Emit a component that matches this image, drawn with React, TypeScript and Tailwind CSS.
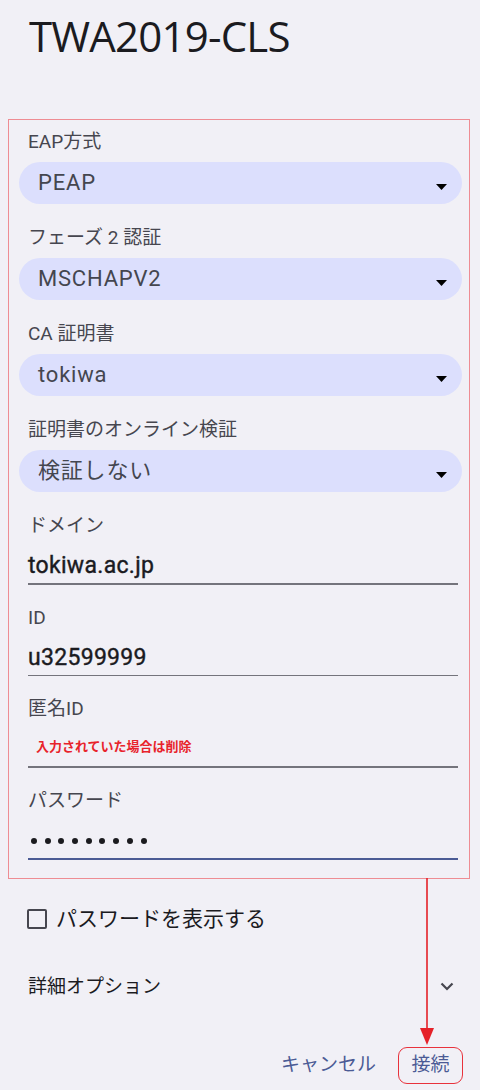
import React from "react"

const selects = [
  { label: "EAP方式", value: "PEAP" },
  { label: "フェーズ 2 認証", value: "MSCHAPV2" },
  { label: "CA 証明書", value: "tokiwa" },
  { label: "証明書のオンライン検証", value: "検証しない" },
]

function Caret() {
  return (
    <svg width="11" height="6" viewBox="0 0 11 6" className="mt-[8px] shrink-0">
      <polygon points="0,0 11,0 5.5,6" fill="#000" />
    </svg>
  )
}

function SelectField({ label, value }: { label: string; value: string }) {
  return (
    <div className="mb-[22px]">
      <div className="ml-[19px] text-[19px] leading-[24px] text-[#46464f]">{label}</div>
      <div className="ml-[10px] mr-[7px] mt-[8px] flex h-[42px] items-center justify-between rounded-full bg-[#dcdffd] pl-[19px] pr-[15px]">
        <span className="text-[22px] leading-[26px] tracking-[0.8px] text-[#44464f]">{value}</span>
        <Caret />
      </div>
    </div>
  )
}

function TextField({
  label,
  children,
  focused,
  last,
}: {
  label: string
  children: React.ReactNode
  focused?: boolean
  last?: boolean
}) {
  return (
    <div className={last ? "" : "mb-[21px]"}>
      <div className="ml-[19px] text-[19px] leading-[24px] text-[#46464f]">{label}</div>
      <div className="ml-[19px] mr-[11px] mt-[13px] flex h-[30px] items-center">{children}</div>
      <div
        className={
          focused
            ? "ml-[19px] mr-[11px] mt-[2px] h-[2px] bg-[#4b5b95]"
            : "ml-[19px] mr-[11px] mt-[2px] h-[1.5px] bg-[#74747c]"
        }
      />
    </div>
  )
}

export default function App() {
  return (
    <div className="relative h-[1090px] w-[480px] overflow-hidden bg-[#f1f0f6] font-[Roboto,'Noto_Sans_CJK_JP',sans-serif]">
      <h1 className="ml-[29px] mt-[11px] font-['Open_Sans','Noto_Sans_CJK_JP',sans-serif] text-[42px] leading-[50px] tracking-[-0.8px] text-[#1b1b1f]">
        TWA2019-CLS
      </h1>

      <div className="ml-[8px] mt-[58px] w-[462px] border border-[#ee8c93] pb-[18px] pt-[10px]">
        {selects.map((s) => (
          <SelectField key={s.label} label={s.label} value={s.value} />
        ))}
        <div className="h-px -mt-px" />

        <TextField label="ドメイン">
          <span className="text-[23px] font-normal leading-[30px] tracking-[0.3px] text-[#1b1b1f] [-webkit-text-stroke:0.4px_#1b1b1f]">
            tokiwa.ac.jp
          </span>
        </TextField>
        <TextField label="ID">
          <span className="text-[23px] font-normal leading-[30px] tracking-[0.3px] text-[#1b1b1f] [-webkit-text-stroke:0.4px_#1b1b1f]">
            u32599999
          </span>
        </TextField>
        <TextField label="匿名ID">
          <span className="pb-[4px] pl-[8px] text-[13px] font-bold leading-[18px] text-[#e8232b]">
            入力されていた場合は削除
          </span>
        </TextField>
        <TextField label="パスワード" focused last>
          <div className="flex gap-[7.7px] pl-[3px] pt-[1px]">
            {Array.from({ length: 9 }).map((_, i) => (
              <div key={i} className="h-[6px] w-[6px] rounded-full bg-[#1b1b1f]" />
            ))}
          </div>
        </TextField>
      </div>

      <div className="mt-[20px] flex h-[40px] items-center gap-[9px] pl-[27px]">
        <div className="h-[20px] w-[20px] rounded-[2px] border-2 border-[#46464f]" />
        <span className="text-[21px] leading-[28px] text-[#1b1b1f]">パスワードを表示する</span>
      </div>

      <div className="mt-[28px] flex h-[40px] items-center justify-between pl-[28px] pr-[26px]">
        <span className="text-[19px] leading-[26px] text-[#1b1b1f]">詳細オプション</span>
        <svg width="14" height="9" viewBox="0 0 14 9">
          <polyline points="1.5,1.5 7,7 12.5,1.5" fill="none" stroke="#46464f" strokeWidth="2.2" />
        </svg>
      </div>

      <div className="mt-[40px] flex items-center justify-end pr-[17px]">
        <span className="text-[19px] leading-[26px] text-[#4b5b95]">キャンセル</span>
        <div className="ml-[22px] flex h-[37px] w-[65px] items-center justify-center rounded-[9px] border border-[#e8323c]">
          <span className="text-[19px] leading-[26px] text-[#4b5b95]">接続</span>
        </div>
      </div>

      <svg className="pointer-events-none absolute left-0 top-0" width="480" height="1090">
        <line x1="427" y1="878" x2="427" y2="1030" stroke="#e52129" strokeWidth="1.6" />
        <polygon points="420,1028 434,1028 427,1045" fill="#e52129" />
      </svg>
    </div>
  )
}
